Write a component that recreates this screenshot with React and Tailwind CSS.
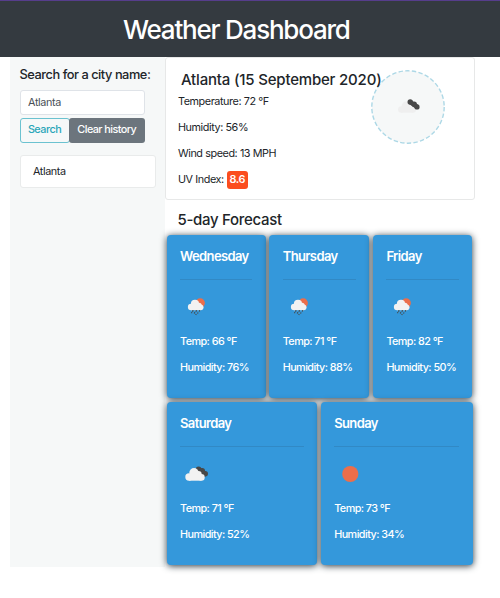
function RainIcon() {
  return (
    <svg className="block h-[20px] w-[20px]" viewBox="0 0 20 20">
      <circle cx="13.2" cy="5" r="4.7" fill="#eb6e4b" />
      <g fill="#f2f2f2">
        <circle cx="4.1" cy="9" r="3.2" />
        <circle cx="8" cy="5.9" r="4.1" />
        <circle cx="12" cy="7.4" r="2.7" />
        <circle cx="13.6" cy="9.3" r="2.9" />
        <rect x="4.1" y="6.4" width="9.6" height="5.8" />
      </g>
      <path
        stroke="#484848"
        strokeWidth="1.2"
        d="M6.2 12.3l-.8 1.3M9.6 12.3l-.8 1.3M12.9 12.3l-.7 1.2M4.9 14.3l-.5.8M7.9 14.3l-.7 1.2M11.1 14.5l-.6 1M9.2 16l-.5 .9"
      />
    </svg>
  );
}

function BrokenCloudIcon() {
  return (
    <svg className="block h-[16px] w-[24px]" viewBox="0 0 24 16">
      <g fill="#484848">
        <circle cx="13.6" cy="3.3" r="2.9" />
        <circle cx="17.2" cy="4.8" r="2.8" />
        <circle cx="20.3" cy="7.8" r="2.7" />
        <path d="M12 6l8 5 2-4-5-5z" />
      </g>
      <g fill="#f2f2f2">
        <circle cx="4" cy="11" r="3.7" />
        <circle cx="9" cy="6.8" r="4.7" />
        <circle cx="13.4" cy="8.3" r="3.3" />
        <circle cx="16.4" cy="11.4" r="3.3" />
        <rect x="4" y="8.2" width="12.4" height="6.5" />
      </g>
    </svg>
  );
}

function SunIcon() {
  return (
    <svg className="block h-[18px] w-[18px]" viewBox="0 0 18 18">
      <circle cx="9.3" cy="9" r="8.1" fill="#eb6e4b" />
    </svg>
  );
}

const icons = {
  rain: <div className="ml-[7px] pt-[2px]"><RainIcon /></div>,
  cloud: <div className="ml-[5px] pt-[3px]"><BrokenCloudIcon /></div>,
  sun: <div className="ml-[7px] pt-[2px]"><SunIcon /></div>,
};

function DayCard({ day, icon, temp, humidity, width }) {
  return (
    <article className={`h-[163px] shrink-0 rounded-[4px] bg-[#3498db] px-[13.5px] pt-[11px] text-white shadow-[0_1px_7px_#27363f] ${width}`}>
      <h4 className="text-[13px] leading-[20px] font-semibold tracking-[-0.62px]">{day}</h4>
      <hr className="mt-[13px] border-[#3189c5]" />
      <div className="mt-[16px] h-[33px]">{icons[icon]}</div>
      <p className="mt-[5px] text-[10.8px] leading-[16px] font-medium tracking-[-0.55px] whitespace-nowrap">Temp: {temp} °F</p>
      <p className="mt-[10px] text-[10.8px] leading-[16px] font-medium tracking-[-0.55px] whitespace-nowrap">Humidity: {humidity}%</p>
    </article>
  );
}

export default function App() {
  return (
    <div className="h-[598px] w-[500px] overflow-hidden bg-white font-['Inter',sans-serif] text-[#212529]">
      <header className="h-[57px] border-t border-[#563d8c] bg-[#343a40] pl-[123px] pt-[9px]">
        <h1 className="text-[26px] leading-[40px] font-medium tracking-[-1.22px] whitespace-nowrap text-white">Weather Dashboard</h1>
      </header>
      <div className="flex pl-[10px]">
        <aside className="h-[510px] w-[155px] shrink-0 bg-[#f6f8f8] pl-[9.5px] pt-[8px]">
          <h2 className="text-[12.8px] leading-[20px] font-medium tracking-[-0.46px] whitespace-nowrap">Search for a city name:</h2>
          <input
            className="mt-[5px] block h-[25px] w-[125px] rounded-[3px] border border-[#dfe3e8] bg-white px-[7.5px] text-[10.8px] tracking-[-0.35px] text-[#495057] outline-none"
            defaultValue="Atlanta"
            aria-label="City"
          />
          <div className="mt-[3px] flex">
            <button className="h-[25px] w-[50px] rounded-[3px] border border-[#6bc2d0] text-[10.8px] font-medium tracking-[-0.5px] text-[#2ba6b9]">Search</button>
            <button className="-ml-px h-[25px] w-[76.5px] rounded-[3px] bg-[#6c757d] text-[10.8px] font-medium tracking-[-0.55px] whitespace-nowrap text-white">Clear history</button>
          </div>
          <ul className="mt-[12px] w-[136px]">
            <li className="h-[33px] rounded-[3px] border border-[#e9ebeb] bg-white pl-[12.5px] text-[10.8px] leading-[32px] tracking-[-0.4px]">Atlanta</li>
          </ul>
        </aside>
        <main>
          <section className="flex h-[143px] w-[310px] rounded-[3px] border border-[#e7e8e8] bg-white pl-[12px] pt-[12px]">
            <div className="z-10 w-[194px] shrink-0 text-[10.8px] leading-[16px] tracking-[-0.42px]">
              <h3 className="ml-[3px] text-[15px] leading-[20px] font-medium tracking-[-0.19px] whitespace-nowrap">Atlanta (15 September 2020)</h3>
              <p className="mt-[4px]">Temperature: 72 °F</p>
              <p className="mt-[10px]">Humidity: 56%</p>
              <p className="mt-[10px]">Wind speed: 13 MPH</p>
              <p className="mt-[9px] flex h-[18px] items-center">
                UV Index:
                <span className="ml-[3px] flex h-[18px] w-[21px] items-center justify-center rounded-[3px] bg-[#fb4d1e] font-semibold text-white">8.6</span>
              </p>
            </div>
            <svg className="-ml-[1.5px] block h-[75px] w-[75px] shrink-0" viewBox="0 0 75 75">
              <circle cx="37" cy="37" r="36.2" fill="#f6f8f8" stroke="#add8e6" strokeWidth="1.4" strokeDasharray="4.4 2.3" />
              <g transform="translate(26 28.5)">
                <g fill="#efefef">
                  <circle cx="4.2" cy="11" r="3.2" />
                  <circle cx="9" cy="7.5" r="4.4" />
                  <circle cx="16" cy="11.2" r="3" />
                  <rect x="4.2" y="8" width="11.8" height="6.2" />
                </g>
                <g fill="#484848">
                  <circle cx="13.2" cy="3.5" r="2.7" />
                  <circle cx="17.2" cy="5.7" r="2.7" />
                  <circle cx="20" cy="8.4" r="2.6" />
                  <path d="M12 5.6l7.2 5 2.2-4.2-7.4-5z" />
                </g>
              </g>
            </svg>
          </section>
          <h3 className="mt-[10px] ml-[12.5px] text-[15px] leading-[20px] font-medium tracking-[-0.3px]">5-day Forecast</h3>
          <div className="mt-[5px] ml-[1.5px] flex w-[307px] flex-wrap gap-x-[3.7px] gap-y-[4px]">
            <DayCard day="Wednesday" icon="rain" temp="66" humidity="76" width="w-[99px]" />
            <DayCard day="Thursday" icon="rain" temp="71" humidity="88" width="w-[100px]" />
            <DayCard day="Friday" icon="rain" temp="82" humidity="50" width="w-[99.5px]" />
            <DayCard day="Saturday" icon="cloud" temp="71" humidity="52" width="w-[150.5px]" />
            <DayCard day="Sunday" icon="sun" temp="73" humidity="34" width="w-[152px]" />
          </div>
        </main>
      </div>
    </div>
  );
}
